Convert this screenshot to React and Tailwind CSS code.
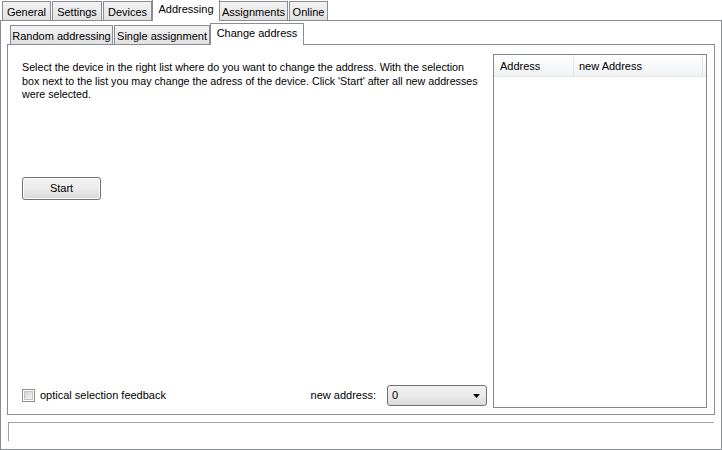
import { useState } from "react";

const outerTabs = [
  { label: "General", w: "w-[49px]" },
  { label: "Settings", w: "w-[50px]" },
  { label: "Devices", w: "w-[49px]" },
  { label: "Addressing", w: "w-[68px]", active: true },
  { label: "Assignments", w: "w-[69px]" },
  { label: "Online", w: "w-[39px]" },
];

const innerTabs = [
  { label: "Random addressing", w: "w-[103px]" },
  { label: "Single assignment", w: "w-[96px]" },
  { label: "Change address", w: "w-[94px]", active: true },
];

const Tab = ({ label, w, active }) =>
  active ? (
    <div
      className={`${w} h-[22px] -mx-[1px] -mb-px relative z-10 flex items-start justify-center pt-[3px] bg-white border border-b-0 border-[#898c95]`}
    >
      {label}
    </div>
  ) : (
    <div
      className={`${w} h-[19px] flex items-center justify-center pt-[2px] bg-linear-to-b from-[#f3f3f3] to-[#e1e1e1] border border-b-0 border-[#898c95] mr-px`}
    >
      {label}
    </div>
  );

const App = () => {
  const [checked, setChecked] = useState(false);

  return (
    <div className="w-[722px] h-[450px] bg-white text-[11px] leading-[13px] text-black font-['Liberation_Sans',Arial,sans-serif] flex flex-col overflow-hidden">
      {/* outer tabs */}
      <div className="h-[20px] flex items-end pl-[2px]">
        {outerTabs.map((t) => (
          <Tab key={t.label} {...t} />
        ))}
      </div>

      <div className="h-[430px] border border-[#898c95] pl-[6px] pr-[6px] flex flex-col">
        {/* inner tabs */}
        <div className="h-[23px] flex items-end pl-[3px]">
          {innerTabs.map((t) => (
            <Tab key={t.label} {...t} />
          ))}
        </div>

        {/* change address page */}
        <div className="h-[371px] border border-[#898c95] flex">
          <div className="flex-1 flex flex-col pl-[14px] pt-[16px] pr-[6px] pb-[8px]">
            <p className="whitespace-nowrap text-[10.7px] leading-[13.5px]">
              Select the device in the right list where do you want to change the address. With the selection
              <br />
              box next to the list you may change the adress of the device. Click 'Start' after all new addresses
              <br />
              were selected.
            </p>

            <button className="mt-[75px] w-[79px] h-[23px] rounded-[3px] border border-[#707070] bg-linear-to-b from-[#f2f2f2] via-[#ebebeb] to-[#d8d8d8] shadow-[inset_0_0_0_1px_#fcfcfc]">
              Start
            </button>

            <div className="mt-auto flex items-center">
              <label className="flex items-center gap-[5px]">
                <span
                  onClick={() => setChecked(!checked)}
                  className="w-[13px] h-[13px] border border-[#8e8f8f] bg-white p-px flex"
                >
                  <span className="flex-1 border border-[#c4c4c4] bg-linear-to-br from-[#d2d2d2] to-[#f6f6f6]" />
                </span>
                optical selection feedback
              </label>

              <span className="ml-auto mr-[11px]">new address:</span>
              <div className="w-[100px] h-[21px] rounded-[3px] border border-[#707070] bg-linear-to-b from-[#f2f2f2] via-[#ebebeb] to-[#dadada] flex items-center pl-[4px] pr-[6px]">
                <span className="flex-1">0</span>
                <svg width="7" height="4" viewBox="0 0 7 4">
                  <path d="M0 0h7L3.5 4z" fill="#000" />
                </svg>
              </div>
            </div>
          </div>

          {/* list view */}
          <div className="w-[214px] mt-[9px] mb-[6px] mr-[7px] border border-[#828790] bg-white">
            <div className="h-[22px] flex bg-linear-to-b from-white to-[#f1f2f4] border-b border-[#e5e5e5]">
              <div className="w-[80px] pl-[6px] pt-px flex items-center border-r border-[#e3e4e6]">
                Address
              </div>
              <div className="w-[129px] pl-[5px] pt-px flex items-center border-r border-[#e3e4e6]">
                new Address
              </div>
            </div>
          </div>
        </div>

        {/* status box */}
        <div className="mt-[7px] ml-px mr-px h-[19px] border-t border-l border-[#a0a0a0]" />
      </div>
    </div>
  );
};

export default App;
